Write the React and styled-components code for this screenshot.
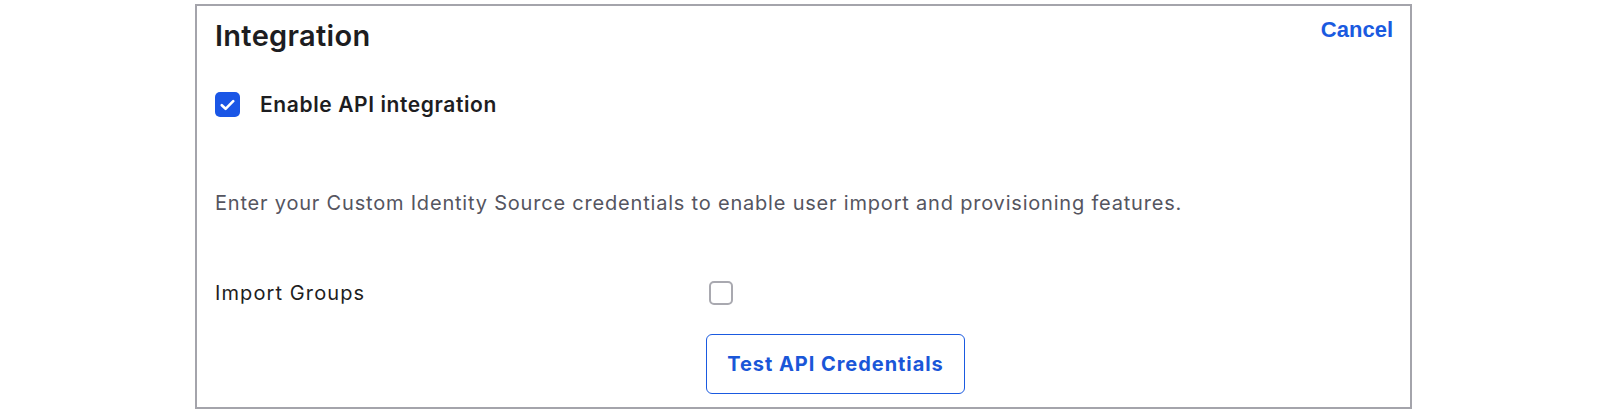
import React from 'react';
import styled, { createGlobalStyle } from 'styled-components';

const GlobalStyle = createGlobalStyle`
  body {
    margin: 0;
    background: #fff;
    font-family: Inter, "Noto Sans", sans-serif;
    color: #1d1d21;
  }
`;

const Page = styled.div`
  width: 1604px;
  height: 414px;
  padding: 4px 0 0 195px;
  box-sizing: border-box;
`;

const Panel = styled.section`
  width: 1217px;
  box-sizing: border-box;
  border: 2px solid #a4a4ab;
  padding: 12px 17px 13px 18px;
  display: flex;
  flex-direction: column;
`;

const Header = styled.div`
  display: flex;
  justify-content: space-between;
  align-items: flex-start;
`;

const Title = styled.h2`
  margin: 0;
  font-size: 29px;
  line-height: 35px;
  letter-spacing: 0.3px;
  font-weight: 600;
  color: #1d1d21;
`;

const LinkButton = styled.button`
  border: 0;
  background: none;
  padding: 0;
  font-family: "Liberation Sans", Arial, sans-serif;
  font-weight: 700;
  font-size: 22px;
  line-height: 24px;
  color: #1a5ae0;
  cursor: pointer;
`;

const CheckRow = styled.label`
  margin-top: 39px;
  display: flex;
  align-items: center;
  gap: 20px;
  height: 25px;
  font-size: 21px;
  letter-spacing: 0.6px;
  font-weight: 600;
  color: #1d1d21;
`;

const Box = styled.span`
  width: ${p => p.size}px;
  height: ${p => p.size}px;
  box-sizing: border-box;
  border-radius: 5px;
  display: inline-flex;
  align-items: center;
  justify-content: center;
  flex-shrink: 0;
  margin-left: ${p => p.offset || 0}px;
  background: ${p => (p.checked ? '#1a56e6' : '#fff')};
  border: ${p => (p.checked ? 'none' : '2px solid #a9a9b0')};
`;

const Description = styled.p`
  margin: 74px 0 0;
  font-size: 20px;
  line-height: 24px;
  letter-spacing: 0.8px;
  color: #55555f;
`;

const FieldRow = styled.div`
  margin-top: ${p => p.gapTop}px;
  display: grid;
  grid-template-columns: 491px 1fr;
  align-items: center;
`;

const FieldLabel = styled.span`
  font-size: 20px;
  line-height: 24px;
  letter-spacing: 1.1px;
  color: #1d1d21;
`;

const OutlineButton = styled.button`
  width: 259px;
  height: 60px;
  box-sizing: border-box;
  border: 1.5px solid #1a5ae0;
  border-radius: 6px;
  background: #fff;
  font-family: Inter, "Noto Sans", sans-serif;
  font-size: 20px;
  letter-spacing: 0.95px;
  font-weight: 700;
  color: #1a56d8;
  cursor: pointer;
`;

const Checkbox = ({ checked, size, offset }) => (
  <Box checked={checked} size={size} offset={offset}>
    {checked && (
      <svg width="15" height="12" viewBox="0 0 15 12" fill="none">
        <path d="M1.8 6.2 L5.6 9.8 L13.2 2.2" stroke="#fff" strokeWidth="2.6" strokeLinecap="round" strokeLinejoin="round" />
      </svg>
    )}
  </Box>
);

export default function App() {
  return (
    <Page>
      <GlobalStyle />
      <Panel>
        <Header>
          <Title>Integration</Title>
          <LinkButton>Cancel</LinkButton>
        </Header>
        <CheckRow>
          <Checkbox checked size={25} />
          Enable API integration
        </CheckRow>
        <Description>
          Enter your Custom Identity Source credentials to enable user import and provisioning features.
        </Description>
        <FieldRow gapTop={66}>
          <FieldLabel>Import Groups</FieldLabel>
          <Checkbox size={24} offset={3} />
        </FieldRow>
        <FieldRow gapTop={29}>
          <span />
          <OutlineButton>Test API Credentials</OutlineButton>
        </FieldRow>
      </Panel>
    </Page>
  );
}
